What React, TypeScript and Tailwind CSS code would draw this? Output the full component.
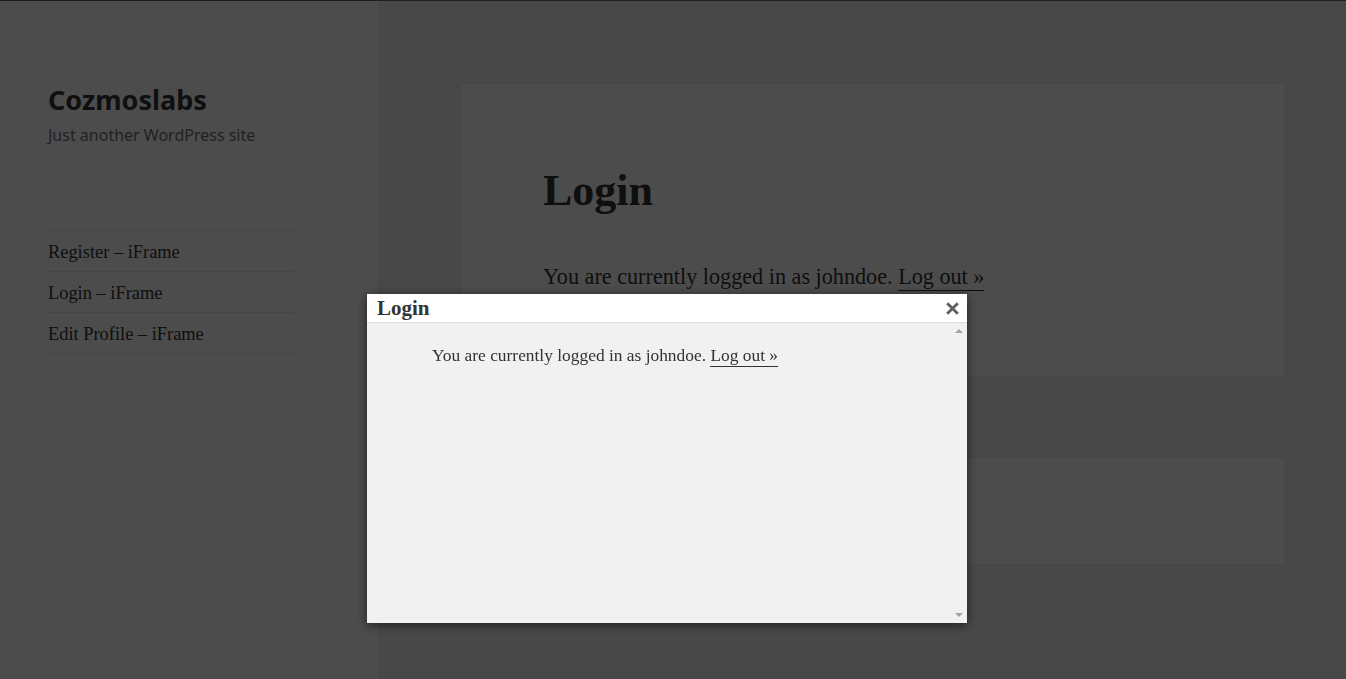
const menu = ["Register – iFrame", "Login – iFrame", "Edit Profile – iFrame"];

const serif = "font-['Liberation_Serif','Times_New_Roman',serif]";

function CloseIcon() {
  return (
    <svg viewBox="0 0 12 12" className="h-[13px] w-[13px]" aria-hidden>
      <path d="M2 2 L10 10 M10 2 L2 10" stroke="#5f5f5f" strokeWidth="2.6" strokeLinecap="square" />
    </svg>
  );
}

function LoginModal() {
  return (
    <div className="fixed left-[367px] top-[294px] flex h-[329px] w-[600px] flex-col bg-[#f1f1f1] shadow-[0_2px_10px_rgba(0,0,0,0.6)]">
      <div className="flex h-[29px] shrink-0 items-center justify-between border-b border-[#dcdcdc] bg-white pl-[10px] pr-[8px]">
        <span className={`${serif} text-[21px] font-bold leading-none text-[#333]`}>Login</span>
        <button type="button" className="flex items-center">
          <CloseIcon />
        </button>
      </div>
      <div className="flex min-h-0 flex-1">
        <div className="flex-1 pl-[65px] pt-[21px]">
          <p className={`${serif} text-[17.4px] leading-[22px] text-[#333]`}>
            You are currently logged in as johndoe.{" "}
            <a className="border-b border-[#333] pb-[1px]">Log out »</a>
          </p>
        </div>
        <div className="flex w-[17px] flex-col items-center justify-between py-[6px]">
          <span className="h-0 w-0 border-x-[4px] border-b-[4px] border-x-transparent border-b-[#a3a3a3]" />
          <span className="h-0 w-0 border-x-[4px] border-t-[4px] border-x-transparent border-t-[#a3a3a3]" />
        </div>
      </div>
    </div>
  );
}

export default function App() {
  return (
    <div className="relative flex min-h-[679px] border-t border-[#666] bg-[#f1f1f1]">
      <aside className="w-[378px] shrink-0 bg-white pl-[48px] pt-[83px] shadow-[0_0_1px_rgba(0,0,0,0.15)]">
        <h1 className="font-['Noto_Sans',sans-serif] text-[27px] font-bold leading-[32px] text-[#333]">Cozmoslabs</h1>
        <p className="mt-[8px] font-['Noto_Sans',sans-serif] text-[16px] leading-[22px] text-[#707070]">
          Just another WordPress site
        </p>
        <nav className="mt-[84px] w-[247px] border-t border-[#eaeaea]">
          {menu.map((item) => (
            <div key={item} className={`${serif} h-[41px] border-b border-[#eaeaea] pt-[10px] text-[18.4px] leading-[22px] text-[#333]`}>
              {item}
            </div>
          ))}
        </nav>
      </aside>

      <main className="flex-1 pl-[83px] pr-[61px] pt-[83px]">
        <article className="h-[292px] bg-white px-[82px] pt-[81px] shadow-[0_0_1px_rgba(0,0,0,0.15)]">
          <h2 className={`${serif} text-[44px] font-bold leading-[52px] text-[#333]`}>Login</h2>
          <p className={`${serif} mt-[45px] text-[22.2px] leading-[30px] text-[#333]`}>
            You are currently logged in as johndoe.{" "}
            <a className="border-b border-[#333] pb-[1px]">Log out »</a>
          </p>
        </article>
        <div className="mt-[82px] h-[106px] bg-white shadow-[0_0_1px_rgba(0,0,0,0.15)]" />
      </main>

      <div className="fixed inset-0 bg-black/70" />
      <LoginModal />
    </div>
  );
}
